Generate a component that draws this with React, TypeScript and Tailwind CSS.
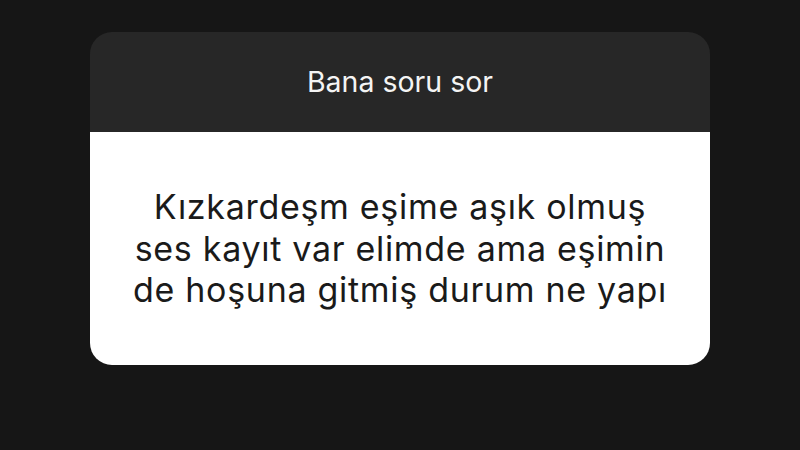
export default function App() {
  return (
    <div className="w-[800px] h-[450px] bg-[#161616] pt-[32px] px-[90px]" style={{ fontFamily: "Inter, 'Liberation Sans', sans-serif" }}>
      <div className="w-[620px] rounded-[22px] overflow-hidden">
        {/* header */}
        <div className="h-[100px] bg-[#272727] flex items-center justify-center">
          <span className="text-[#f4f4f4] text-[28.5px] leading-none">Bana soru sor</span>
        </div>
        {/* question */}
        <div className="h-[233px] bg-white flex items-center justify-center">
          <p className="text-[#1a1a1a] text-[34px] tracking-[0.7px] leading-[41.5px] text-center">
            Kızkardeşm eşime aşık olmuş
            <br />
            ses kayıt var elimde ama eşimin
            <br />
            de hoşuna gitmiş durum ne yapı
          </p>
        </div>
      </div>
    </div>
  );
}
